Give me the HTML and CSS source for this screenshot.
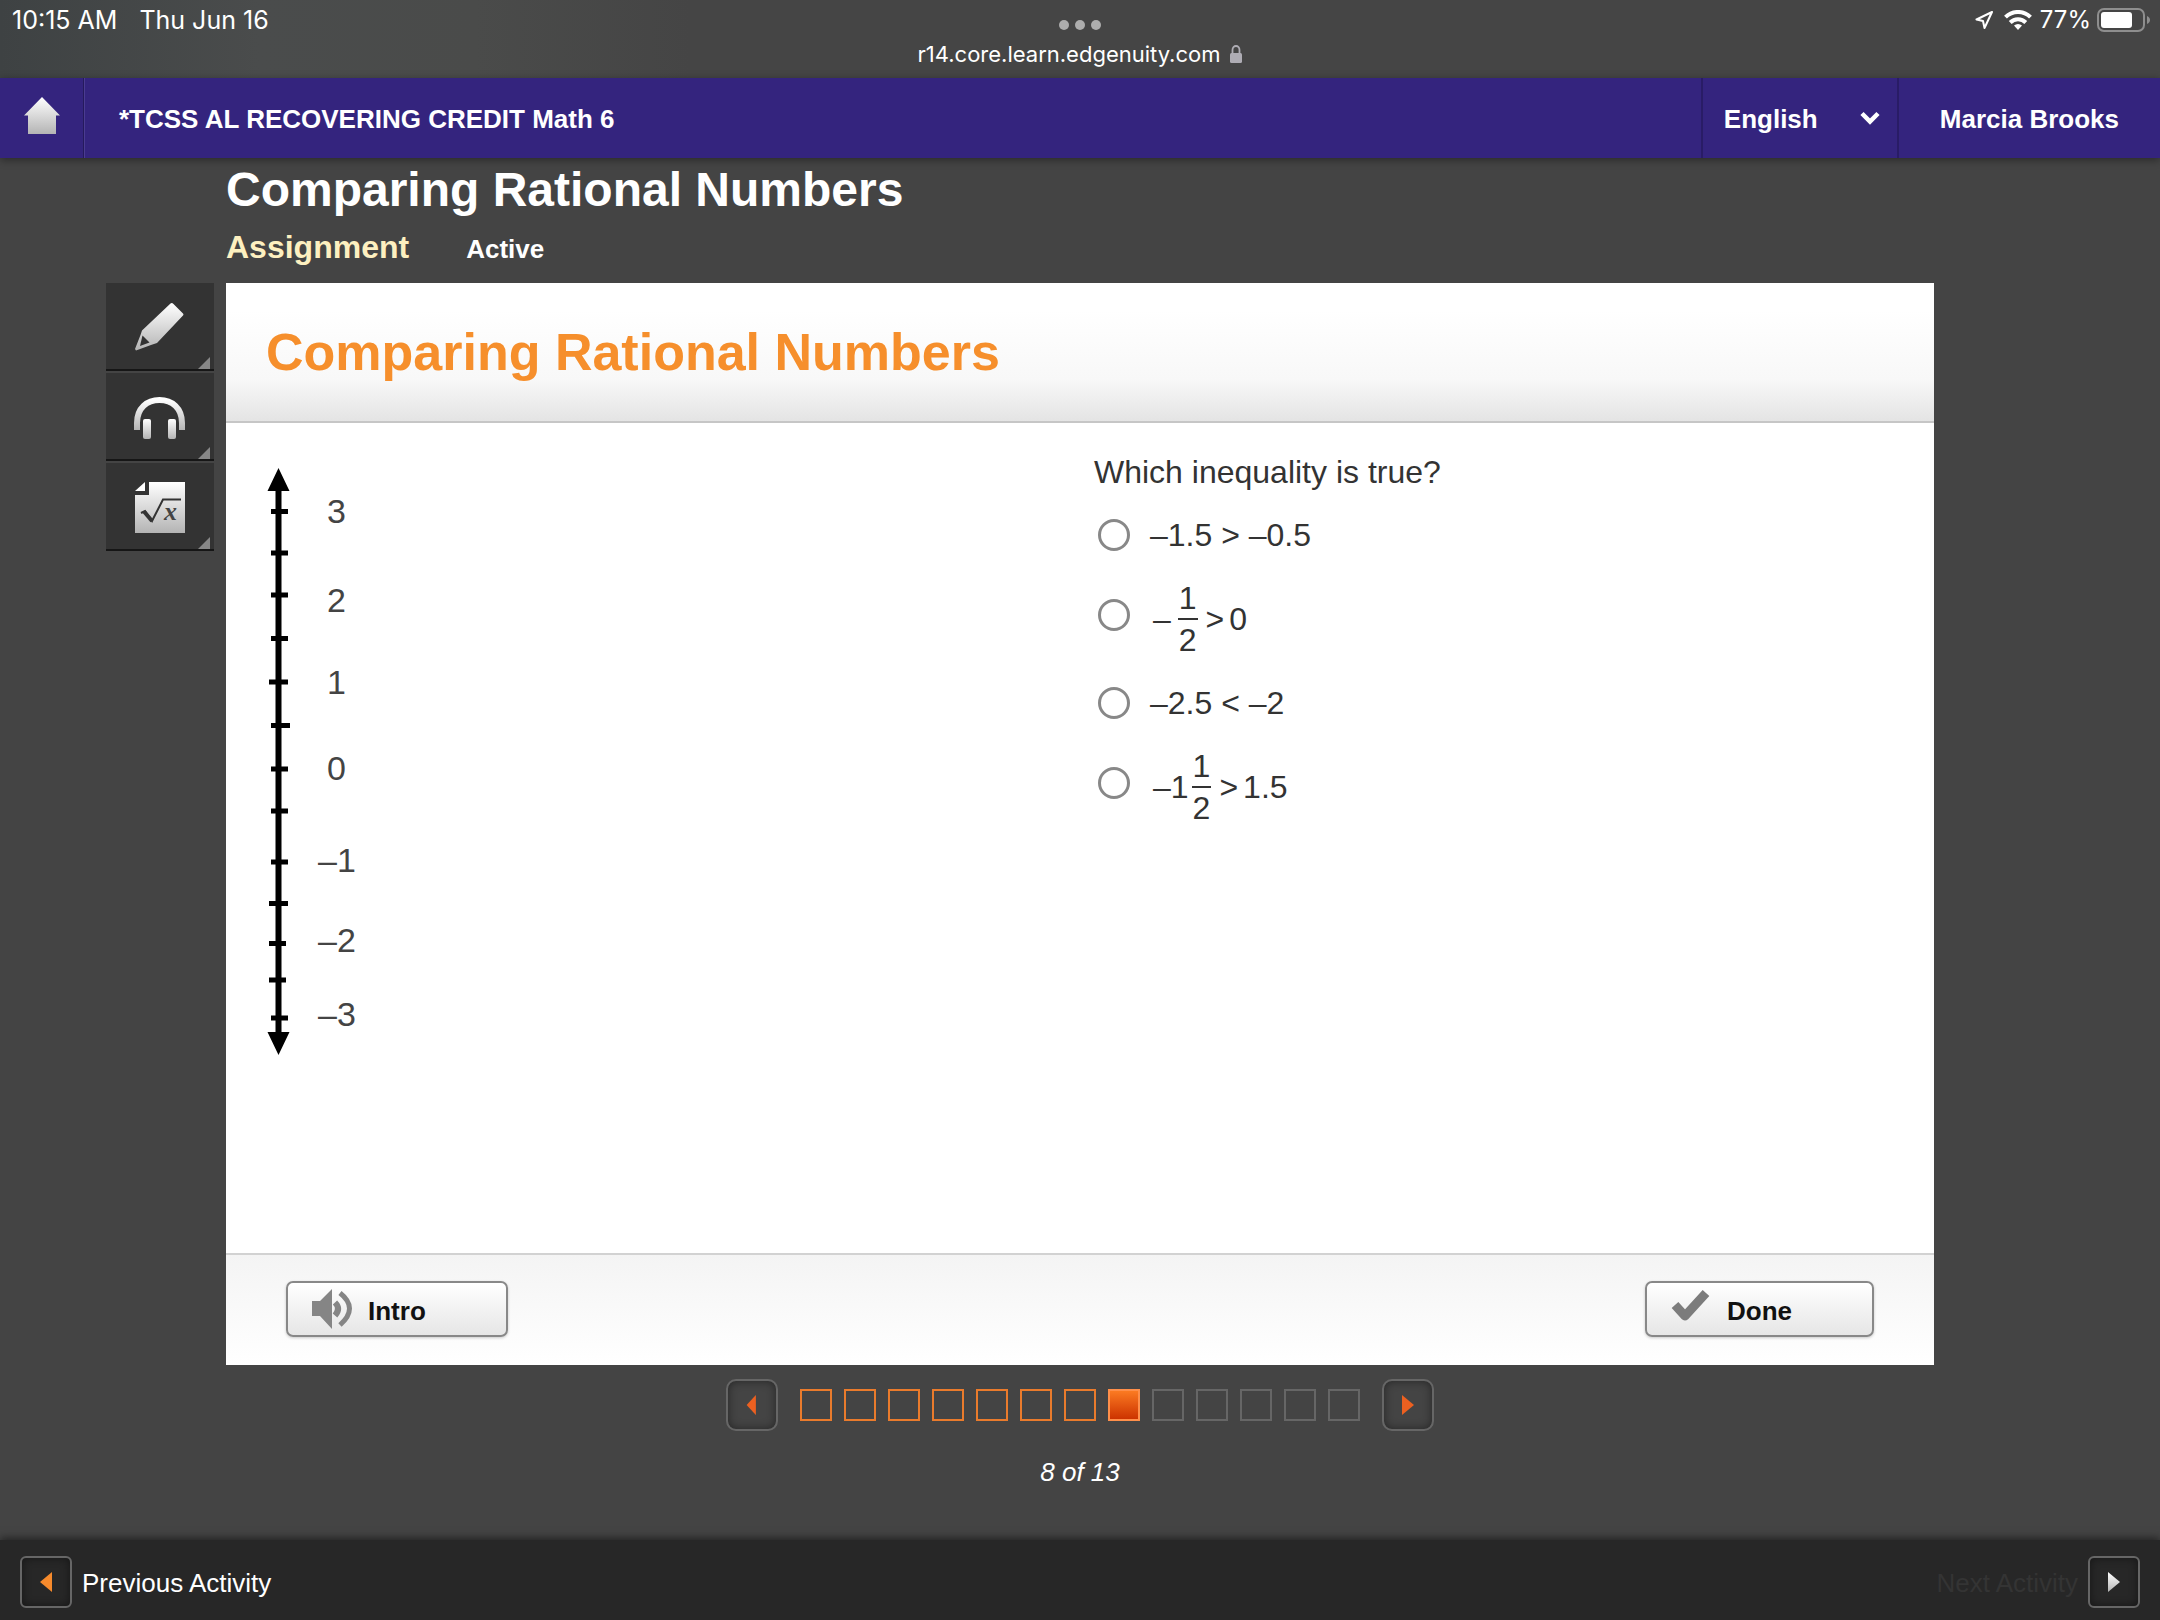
FILE: index.html
```html
<!DOCTYPE html>
<html lang="en">
<head>
    <meta charset="UTF-8">
    <meta name="viewport" content="width=device-width, initial-scale=1.0">
    <title>Comparing Rational Numbers</title>
    <link rel="stylesheet" href="styles.css">
</head>
<body>
    <div class="status-bar">
        <div class="status-left">
            <span>10:15 AM</span>
            <span>Thu Jun 16</span>
        </div>
        <div class="status-center">
            <svg class="dots" width="42" height="10" viewBox="0 0 42 10" fill="#adadad">
                <circle cx="5" cy="5" r="5"/><circle cx="21" cy="5" r="5"/><circle cx="37" cy="5" r="5"/>
            </svg>
            <div class="address">
                <span>r14.core.learn.edgenuity.com</span>
                <svg width="12" height="18" viewBox="0 0 12 18">
                    <path d="M2.5 9V5a3.5 4 0 0 1 7 0v4" fill="none" stroke="#aeacb4" stroke-width="1.8"/>
                    <rect x="0" y="8" width="12" height="10" rx="1.5" fill="#aeacb4"/>
                </svg>
            </div>
        </div>
        <div class="status-right">
            <svg width="18" height="18" viewBox="0 0 18 18" fill="none" stroke="#fff" stroke-width="2" stroke-linejoin="round">
                <path d="M17 1L1.500 8.500L8 10L9.500 17Z"/>
            </svg>
            <svg class="wifi" width="28" height="20" viewBox="0 0 28 20" fill="none" stroke="#fff" stroke-width="4">
                <path d="M1.500 7.200a17.500 17.500 0 0 1 25 0"/>
                <path d="M6.200 12.500a11 11 0 0 1 15.600 0"/>
                <path d="M14 20l-4-4.500a6 6 0 0 1 8 0z" fill="#fff" stroke="none"/>
            </svg>
            <span>77%</span>
            <svg class="battery" width="54" height="24" viewBox="0 0 54 24">
                <rect x="1" y="1" width="46" height="22" rx="6" fill="none" stroke="#8e8e8e" stroke-width="2"/>
                <rect x="4" y="4" width="31" height="16" rx="3" fill="#fff"/>
                <path d="M50 8c4 1.500 4 6.500 0 8z" fill="#8e8e8e"/>
            </svg>
        </div>
    </div>

    <header>
        <a class="home" href="#" aria-label="Home">
            <svg width="38" height="40" viewBox="0 0 38 40">
                <defs>
                    <linearGradient id="silver" x1="0" y1="0" x2="0" y2="1">
                        <stop offset="0" stop-color="#fff"/>
                        <stop offset="1" stop-color="#b4b4b4"/>
                    </linearGradient>
                </defs>
                <path d="M19 1L37 19.500H33V38H5V19.500H1Z" fill="url(#silver)"/>
            </svg>
        </a>
        <div class="course">*TCSS AL RECOVERING CREDIT Math 6</div>
        <div class="language">
            <select aria-label="Language">
                <option>English</option>
            </select>
            <svg class="chevron" width="20" height="14" viewBox="0 0 20 14" fill="none" stroke="#fff" stroke-width="4.500">
                <path d="M2 2.500L10 10.500L18 2.500"/>
            </svg>
        </div>
        <button class="user">Marcia Brooks</button>
    </header>

    <main>
        <div class="page-heading">
            <h1>Comparing Rational Numbers</h1>
            <div class="activity-info">
                <span class="activity-type">Assignment</span>
                <span class="activity-status">Active</span>
            </div>
        </div>

        <div class="workspace">
            <div class="tools">
                <button class="tool" aria-label="Highlighter">
                    <svg width="52" height="52" viewBox="0 0 52 52">
                        <path d="M36.500 1.500Q38 0.500 39.500 2L49 11.500Q50 12.500 49 13.500L23 41L17 43L2 48.500L1 47L6.500 33L8 28.500Z" fill="url(#silver)"/>
                        <path d="M8.500 33.500L15.500 40.500L6 44Z" fill="#333"/>
                    </svg>
                </button>
                <button class="tool" aria-label="Audio">
                    <svg width="52" height="44" viewBox="0 0 52 44">
                        <path d="M3 34V27C3 12 13 4 25.500 4S48 12 48 27V34" fill="none" stroke="url(#silver)" stroke-width="6"/>
                        <rect x="9" y="23" width="8" height="20" rx="2" fill="url(#silver)"/>
                        <rect x="34" y="23" width="8" height="20" rx="2" fill="url(#silver)"/>
                    </svg>
                </button>
                <button class="tool" aria-label="Formulas">
                    <svg width="52" height="52" viewBox="0 0 52 52">
                        <path d="M15 0H51V51H1V13H15Z" fill="url(#silver)"/>
                        <path d="M11 0V9H1Z" fill="#fff"/>
                        <path d="M7 31L11 29L18 39L29 17.500H47" fill="none" stroke="#333" stroke-width="2"/>
                        <path d="M10 29.500L18 39" stroke="#333" stroke-width="4"/>
                        <text class="formula-x" x="30" y="38">x</text>
                    </svg>
                </button>
            </div>

            <section class="lesson">
                <div class="lesson-header">
                    <h2>Comparing Rational Numbers</h2>
                </div>
                <div class="lesson-body">
                    <div class="figure">
                        <svg class="number-line" width="110" height="590" viewBox="0 0 110 590" role="img" aria-label="Number line from -3 to 3">
                            <path d="M12.500 0L23.500 23H15.500V564H23.500L12.500 587L1.500 564H9.500V23H1.500Z"/>
                            <!-- ticks -->
                            <path d="M5 43.500h17M5 85h17M5 127h17M5 170.500h17M3 214h19M5 257.500h19M5 301h17M5 343h17M5 394h17M3 435.500h19M3 475.500h17M3 512h17M5 550h17" stroke="#000" stroke-width="5"/>
                            <text x="61" y="55">3</text>
                            <text x="61" y="144">2</text>
                            <text x="61" y="226">1</text>
                            <text x="61" y="312">0</text>
                            <text x="52" y="404">–1</text>
                            <text x="52" y="484">–2</text>
                            <text x="52" y="558">–3</text>
                        </svg>
                    </div>
                    <form class="question">
                        <p id="prompt">Which inequality is true?</p>
                        <div class="options" role="radiogroup" aria-labelledby="prompt">
                            <div class="option">
                                <input type="radio" name="answer" id="answer-a">
                                <label for="answer-a">–1.5 &gt; –0.5</label>
                            </div>
                            <div class="option tall">
                                <input type="radio" name="answer" id="answer-b">
                                <label class="math" for="answer-b">
                                    <span class="minus">–</span>
                                    <span class="fraction"><span>1</span><span>2</span></span>
                                    <span class="sign">&gt;</span>
                                    <span>0</span>
                                </label>
                            </div>
                            <div class="option">
                                <input type="radio" name="answer" id="answer-c">
                                <label for="answer-c">–2.5 &lt; –2</label>
                            </div>
                            <div class="option tall">
                                <input type="radio" name="answer" id="answer-d">
                                <label class="math" for="answer-d">
                                    <span>–1</span>
                                    <span class="fraction"><span>1</span><span>2</span></span>
                                    <span class="sign">&gt;</span>
                                    <span>1.5</span>
                                </label>
                            </div>
                        </div>
                    </form>
                </div>
                <div class="lesson-footer">
                    <button class="action">
                        <svg width="42" height="42" viewBox="0 0 42 42">
                            <path d="M0 13H8L20 1V41L8 28H0Z" fill="#858585"/>
                            <path d="M23 14.500q6 6 0 13" fill="none" stroke="#858585" stroke-width="6"/>
                            <path d="M28 5q19 15 0 32" fill="none" stroke="#858585" stroke-width="5"/>
                        </svg>
                        <span>Intro</span>
                    </button>
                    <button class="action done">
                        <svg width="42" height="42" viewBox="0 0 42 42">
                            <path d="M4 17L14 28L35 5" fill="none" stroke="#7c7c7c" stroke-width="9" stroke-linejoin="round"/>
                        </svg>
                        <span>Done</span>
                    </button>
                </div>
            </section>
        </div>

        <nav class="pager">
            <button class="arrow" aria-label="Previous">
                <svg width="14" height="26" viewBox="0 0 14 26"><path d="M12 0V26L0 13Z" fill="#ec6020"/></svg>
            </button>
            <div class="frames">
                <button class="frame" aria-label="1"></button>
                <button class="frame" aria-label="2"></button>
                <button class="frame" aria-label="3"></button>
                <button class="frame" aria-label="4"></button>
                <button class="frame" aria-label="5"></button>
                <button class="frame" aria-label="6"></button>
                <button class="frame" aria-label="7"></button>
                <button class="frame current" aria-label="8"></button>
                <button class="frame locked" aria-label="9" disabled></button>
                <button class="frame locked" aria-label="10" disabled></button>
                <button class="frame locked" aria-label="11" disabled></button>
                <button class="frame locked" aria-label="12" disabled></button>
                <button class="frame locked" aria-label="13" disabled></button>
            </div>
            <button class="arrow" aria-label="Next">
                <svg width="14" height="20" viewBox="0 0 14 20"><path d="M1 0V20L13 10Z" fill="#ec6020"/></svg>
            </button>
        </nav>
        <p class="pager-count">8 of 13</p>
    </main>

    <footer>
        <button class="activity-nav">
            <span class="arrow small">
                <svg width="14" height="20" viewBox="0 0 14 20"><path d="M13 0V20L1 10Z" fill="#f68a2c"/></svg>
            </span>
            <span class="nav-label">Previous Activity</span>
        </button>
        <button class="activity-nav next" disabled>
            <span class="nav-label">Next Activity</span>
            <span class="arrow small">
                <svg width="14" height="20" viewBox="0 0 14 20"><path d="M1 0V20L13 10Z" fill="url(#silver)"/></svg>
            </span>
        </button>
    </footer>
</body>
</html>
```
FILE: styles.css
```css
* {
    box-sizing: border-box;
}
body {
    font-family: "Liberation Sans", Arial, sans-serif;
    font-size: 26px;
    margin: 0;
    min-height: 100vh;
    display: flex;
    flex-direction: column;
    background-color: #444;
    color: #fff;
}
h1, h2, p {
    margin: 0;
}
button, select {
    font: inherit;
    color: inherit;
    margin: 0;
    padding: 0;
    border: none;
    background: none;
    cursor: pointer;
}
svg {
    display: block;
    flex: none;
}

/* Status bar */
.status-bar {
    display: grid;
    grid-template-columns: 1fr auto 1fr;
    height: 78px;
    font-family: Inter, sans-serif;
    font-size: 24px;
    line-height: 28px;
    background: linear-gradient(to right, #3e4243, #4a4c4c 12%, #4a4b4a 22%, #454545 32%);
}
.status-left {
    display: flex;
    gap: 22px;
    padding: 6px 12px;
    font-size: 25px;
}
.status-center {
    display: flex;
    flex-direction: column;
    align-items: center;
    padding-top: 20px;
}
.address {
    display: flex;
    align-items: center;
    gap: 10px;
    margin-top: 10px;
    font-size: 22px;
}
.status-right {
    display: flex;
    justify-content: flex-end;
    align-items: center;
    align-self: start;
    height: 28px;
    margin-top: 6px;
    padding-right: 9px;
}
.wifi {
    margin: 0 8px 0 11px;
}
.battery {
    margin-left: 6px;
}

/* Course bar */
header {
    display: flex;
    height: 80px;
    background-color: #34247e;
    font-weight: bold;
    box-shadow: 0 2px 8px rgba(0, 0, 0, 0.4);
}
.home {
    display: flex;
    align-items: center;
    justify-content: center;
    width: 84px;
    padding-bottom: 4px;
    border-right: 1px solid #251a5c;
}
.course {
    flex: 1;
    padding-left: 34px;
    line-height: 82px;
    border-left: 1px solid #4b3c91;
}
.language {
    position: relative;
    width: 196px;
    border-left: 2px solid #291c66;
}
.language select {
    width: 100%;
    height: 82px;
    padding-left: 21px;
    appearance: none;
    outline: none;
}
.chevron {
    position: absolute;
    right: 17px;
    top: 33px;
    pointer-events: none;
}
.user {
    padding: 2px 41px 0;
    font-weight: bold;
    border-left: 2px solid #291c66;
}

/* Lesson area */
main {
    flex: 1;
}
.page-heading {
    padding: 4px 226px 14px;
}
h1 {
    font-size: 48px;
    line-height: 56px;
}
.activity-info {
    display: flex;
    align-items: baseline;
    gap: 57px;
    margin-top: 9px;
    font-weight: bold;
    line-height: 40px;
}
.activity-type {
    font-size: 32px;
    color: #fdf0c0;
}
.workspace {
    display: flex;
    align-items: flex-start;
    gap: 12px;
    padding: 0 226px 0 106px;
}
.tools {
    display: flex;
    flex-direction: column;
    gap: 2px;
}
.tool {
    position: relative;
    display: flex;
    align-items: center;
    justify-content: center;
    width: 108px;
    height: 88px;
    padding-top: 4px;
    background-color: #333;
    border-bottom: 2px solid #161616;
}
/* corner marker */
.tool::after {
    content: '';
    position: absolute;
    right: 4px;
    bottom: 0;
    border-left: 12px solid transparent;
    border-bottom: 12px solid #888;
}
.formula-x {
    font: italic bold 26px "Liberation Serif", serif;
    fill: #444;
}
.lesson {
    flex: 1;
    background-color: #fff;
    color: #333;
}
.lesson-header {
    display: flex;
    align-items: center;
    height: 140px;
    padding: 0 40px;
    background: linear-gradient(#fff 20%, #f8f8f8 70%, #e4e4e4);
    border-bottom: 2px solid #c6c6c6;
}
h2 {
    font-size: 52px;
    color: #f68f2c;
}
.lesson-body {
    display: grid;
    grid-template-columns: 1fr 1fr;
    min-height: 830px;
    padding: 29px 40px;
}
.figure {
    padding-top: 16px;
}
.number-line text {
    font-size: 34px;
    fill: #444;
}
.question {
    padding-left: 14px;
    font-size: 32px;
    line-height: 40px;
}
.options {
    padding: 11px 4px 0;
}
.option {
    display: flex;
    align-items: center;
    gap: 20px;
    height: 64px;
}
.option.tall {
    height: 96px;
    margin-bottom: 8px;
}
.option input {
    appearance: none;
    width: 32px;
    height: 32px;
    margin: 0;
    border: 3px solid #888;
    border-radius: 50%;
}
.option input:checked {
    background-color: #f68f2c;
}
.math {
    display: flex;
    align-items: center;
    padding: 8px 0 0 3px;
    gap: 3px;
}
.minus {
    margin-right: 4px;
}
.fraction {
    display: flex;
    flex-direction: column;
    text-align: center;
    line-height: 40px;
}
.fraction span:first-child {
    padding: 0 1px;
    border-bottom: 2px solid #333;
}
.sign {
    margin: 0 2px 0 5px;
}
.lesson-footer {
    display: flex;
    justify-content: space-between;
    padding: 26px 60px 28px;
    background: linear-gradient(#f4f4f4, #fff);
    border-top: 2px solid #d2d2d2;
}
.action {
    display: flex;
    align-items: center;
    gap: 14px;
    width: 222px;
    height: 56px;
    padding-left: 24px;
    font-weight: bold;
    color: #111;
    background: linear-gradient(#fff, #e6e6e6);
    border: 2px solid #888;
    border-radius: 7px;
    box-shadow: 0 1px 3px rgba(0, 0, 0, 0.2);
}
.action.done {
    width: 229px;
}
.action span {
    padding-top: 4px;
}

/* Pager */
.pager {
    display: flex;
    justify-content: center;
    align-items: center;
    gap: 22px;
    padding-top: 14px;
}
.arrow {
    display: flex;
    align-items: center;
    justify-content: center;
    width: 52px;
    height: 52px;
    border: 2px solid #666;
    border-radius: 10px;
    box-shadow: inset 0 0 10px rgba(0, 0, 0, 0.45);
}
.pager .arrow svg {
    height: 20px;
}
.arrow.small {
    border-radius: 6px;
}
.frames {
    display: flex;
    gap: 12px;
}
.frame {
    width: 32px;
    height: 32px;
    border: 2px solid #ea7b2c;
}
.frame.current {
    background: linear-gradient(#fb7a22, #cc3300);
    border-color: #ff8f4a;
}
.frame.locked {
    border-color: #666;
}
.pager-count {
    margin-top: 26px;
    text-align: center;
    font-style: italic;
    line-height: 30px;
}

/* Activity navigation */
footer {
    display: flex;
    justify-content: space-between;
    align-items: center;
    height: 80px;
    padding: 4px 20px 0;
    background-color: #272727;
    box-shadow: 0 -2px 8px rgba(0, 0, 0, 0.5);
}
.activity-nav {
    display: flex;
    align-items: center;
    gap: 10px;
}
.activity-nav.next {
    color: #343434;
}
.nav-label {
    padding-top: 2px;
}
```
